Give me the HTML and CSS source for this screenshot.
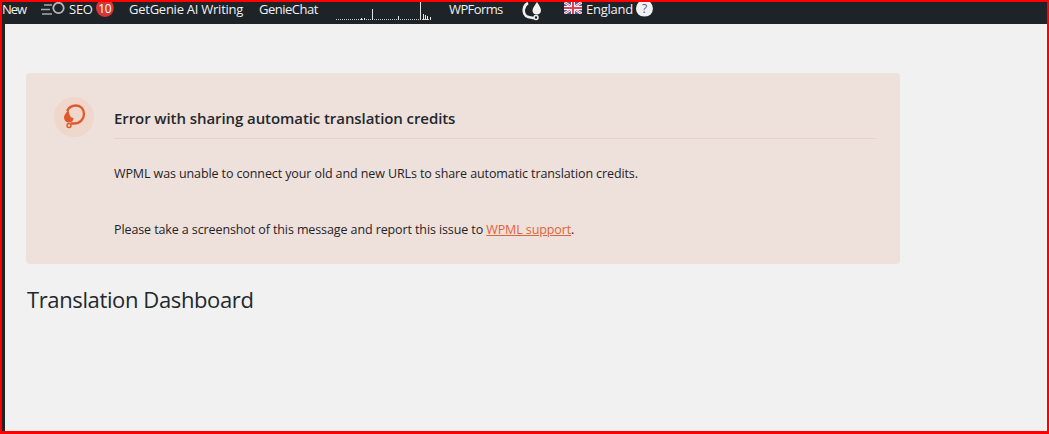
FILE: index.html
```html
<!DOCTYPE html>
<html lang="en">
<head>
<meta charset="utf-8">
<title>Translation Dashboard</title>
<link rel="stylesheet" href="styles.css">
</head>
<body>
<div class="frame">
  <header class="adminbar">
    <span class="item item-new">New</span>
    <span class="item item-seo">
      <svg class="seo-icon" width="25" height="14" viewBox="0 0 25 14"><path d="M3 3H11M0 7.500H9M1 12H11" stroke="#a7aaad" stroke-width="1.300" fill="none"/><circle cx="17.500" cy="6" r="5.200" stroke="#b4b7ba" stroke-width="1.800" fill="none"/></svg>
      <span>SEO</span><span class="badge">10</span>
    </span>
    <span class="item item-genie">GetGenie AI Writing</span>
    <span class="item item-chat">GenieChat</span>
    <svg class="spark" width="96" height="20" viewBox="0 0 96 20">
      <path d="M0 17.500H96" stroke="#c9cacb" stroke-width="1" stroke-dasharray="1 1" fill="none"/>
      <path d="M36.500 18V7M28.500 18V16M84.500 18V0M87.500 18V12M89.500 18V13M91.500 18V14M94.500 18V15M62.500 18V14M25.500 18V16" stroke="#e4e5e6" stroke-width="1" fill="none"/>
    </svg>
    <span class="item item-wpforms">WPForms</span>
    <svg class="wpml-icon" width="20" height="20" viewBox="0 0 20 20"><path d="M6 1C1 3.500 0.500 11 4 14C6 15.500 9 15.500 12 16" stroke="#f0f0f0" stroke-width="2.600" fill="none"/><path d="M15 0C17 3 19 6 19 8.500C19 11 17 12.500 15 12.500C12 12.500 10.500 11 10.500 8.500C10.500 6 13 3 15 0Z" fill="#f0f0f0"/><circle cx="14" cy="15.500" r="2" stroke="#f0f0f0" stroke-width="1.500" fill="none"/></svg>
    <span class="item item-lang">
      <svg class="flag" width="18" height="12" viewBox="0 0 18 12"><rect width="18" height="12" fill="#4a5f9e"/><path d="M0 0L18 12M18 0L0 12" stroke="#fff" stroke-width="2.500"/><path d="M0 0L18 12M18 0L0 12" stroke="#e2566b" stroke-width="1"/><path d="M9 0V12M0 6H18" stroke="#fff" stroke-width="4"/><path d="M9 0V12M0 6H18" stroke="#e2405a" stroke-width="2.200"/></svg>
      <span>England</span><span class="help">?</span>
    </span>
  </header>
  <div class="body-row">
    <div class="sidebar"></div>
    <main class="content">
      <section class="notice">
        <div class="notice-icon">
          <svg width="24" height="26" viewBox="0 0 24 26"><path d="M5 7C7 3 11 1.500 14 1.500C19 1.500 22 5.500 22 10C22 15 18 19.500 12 19.500L9 19.500" stroke="#df5a2b" stroke-width="2.300" fill="none"/><path d="M6.500 5C4.500 9 2 11 2 13.500C2 16.500 4.500 18.500 7 18.500C10 18.500 11.500 16.500 11.500 14C8.500 14 7 11 6.500 5Z" fill="#df5a2b"/><circle cx="7" cy="21.500" r="2" stroke="#df5a2b" stroke-width="1.500" fill="none"/></svg>
        </div>
        <div class="notice-body">
          <h2 class="notice-title">Error with sharing automatic translation credits</h2>
          <p class="notice-line">WPML was unable to connect your old and new URLs to share automatic translation credits.</p>
          <p class="notice-line notice-last">Please take a screenshot of this message and report this issue to <a class="notice-link" href="#">WPML support</a>.</p>
        </div>
      </section>
      <h1 class="page-title">Translation Dashboard</h1>
    </main>
  </div>
</div>
</body>
</html>
```
FILE: styles.css
```css
* { box-sizing: border-box; }
html, body { margin: 0; height: 100%; }
body {
  font-family: "Open Sans", "Noto Sans", "Liberation Sans", sans-serif;
  background: #f1f1f1;
  color: #1d2327;
  overflow: hidden;
}
.frame {
  height: 434px;
  border: solid #ff0000;
  border-width: 2px 2px 3px 2px;
  display: flex;
  flex-direction: column;
}
.adminbar {
  height: 22px;
  flex: none;
  background: #1d2327;
  color: #f0f0f1;
  display: flex;
  align-items: flex-start;
  font-size: 13px;
  white-space: nowrap;
  letter-spacing: -0.25px;
}
.item { display: flex; align-items: center; height: 14px; line-height: 14px; }
.item-new { width: 39px; letter-spacing: -1.1px; }
.seo-icon { flex: none; margin-right: 3px; }
.item-seo { width: 88px; }
.badge {
  flex: none;
  width: 18px; height: 18px; border-radius: 50%;
  background: #d63638; color: #fff; font-size: 12px;
  display: flex; align-items: center; justify-content: center;
  margin: -2px 0 0 3px;
  padding-top: 2px;
  clip-path: inset(3px 0 0 0);
  letter-spacing: -0.5px;
}
.item-genie { width: 130px; }
.item-chat { width: 77px; letter-spacing: -0.5px; }
.spark { flex: none; margin-right: 17px; }
.item-wpforms { width: 73px; letter-spacing: -0.6px; }
.wpml-icon { flex: none; margin-right: 22px; }
.item-lang { gap: 4px; }
.flag { flex: none; margin-top: -2px; }
.help {
  flex: none;
  width: 17px; height: 17px; border-radius: 50%;
  background: #f0f0f1; color: #50575e;
  display: flex; align-items: center; justify-content: center;
  font-size: 12px;
  margin: -2px 0 0 -1px;
  padding-top: 2px;
  clip-path: inset(2.500px 0 0 0);
}
.body-row { flex: 1; display: flex; min-height: 0; }
.sidebar { width: 3px; flex: none; background: #1d2327; }
.content { flex: 1; padding: 49px 0 0 21px; }
.notice {
  width: 874px;
  height: 191px;
  background: #eee0db;
  border-radius: 4px;
  display: flex;
  padding: 24px 24px 0 28px;
}
.notice-icon {
  width: 40px; height: 40px; border-radius: 50%;
  background: #efd7cc;
  display: flex; align-items: center; justify-content: center;
  flex: none;
  margin-right: 20px;
}
.notice-body { flex: 1; }
.notice-title {
  margin: 0;
  font-size: 15px;
  font-weight: 600;
  line-height: 20px;
  padding: 11px 0 10px;
  border-bottom: 1px solid #f0cfc0;
  color: #23282d;
  letter-spacing: -0.08px;
}
.notice-line {
  margin: 0;
  font-size: 12.500px;
  line-height: 18px;
  padding-top: 26px;
  color: #1f2429;
  letter-spacing: -0.105px;
}
.notice-last { padding-top: 38px; }
.notice-link { color: #e0643a; }
.page-title {
  margin: 21px 0 0 1px;
  font-size: 22px;
  font-weight: 400;
  line-height: 28px;
  color: #23282d;
  letter-spacing: -0.38px;
}
```
